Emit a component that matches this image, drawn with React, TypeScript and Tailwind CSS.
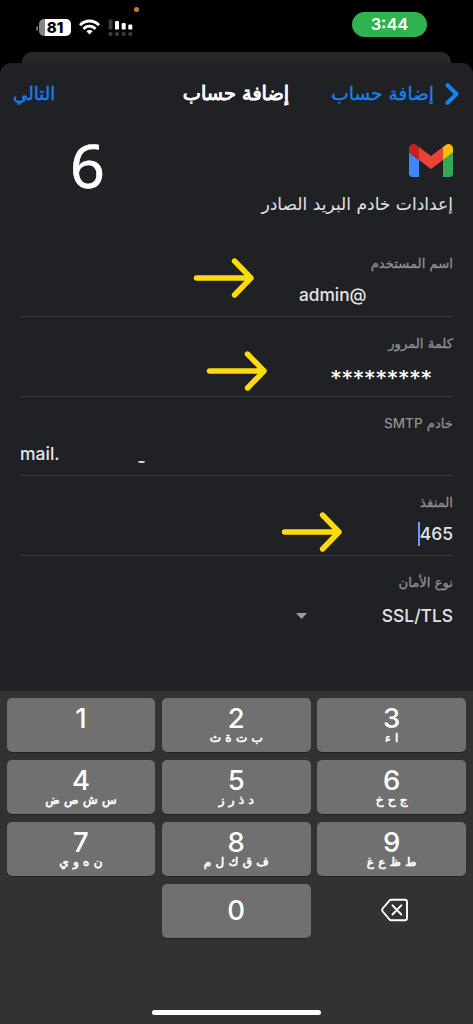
import type { ReactNode } from "react";

const AR = "font-['DejaVu_Sans',sans-serif]";
const EN = "font-['Inter',sans-serif]";

function StatusBar() {
  return (
    <div dir="ltr" className="relative flex h-[52px] justify-between pr-[46px] pl-[36px]">
      <span className="absolute left-[134px] top-[7px] size-[5px] rounded-full bg-[#c8830c]" />
      <div className="flex h-[52px] items-start pt-[19px]">
        <span className="mt-[7px] h-[5px] w-[2px] rounded-l-full bg-[#6f6f6f]" />
        <span className={`ml-[1px] flex h-[17px] w-[32px] items-center justify-center rounded-[5px] bg-[linear-gradient(90deg,#858585_6px,#ffffff_6px)] text-[15px] font-extrabold leading-none text-black ${EN}`}>
          81
        </span>
        <svg className="ml-[8px]" width="21" height="16" viewBox="0 0 21 16" fill="none" stroke="#fff" strokeWidth="2.9">
          <path d="M1 6.2C6.2 0.6 14.8 0.6 20 6.2" />
          <path d="M4.5 10C8 6.2 13 6.2 16.5 10" />
          <path d="M7.4 12.2Q10.5 9.6 13.6 12.2L10.5 15.4Z" fill="#fff" stroke="none" />
        </svg>
        <svg className="ml-[8px]" width="25" height="18" viewBox="0 0 25 18">
          <g fill="#3b3b3b">
            <rect x="0.5" y="0.5" width="4" height="10" rx="1" />
            <rect x="0.5" y="13" width="4" height="4" rx="1.5" />
            <rect x="7" y="13" width="4" height="4" rx="1.5" />
            <rect x="13.7" y="13" width="4" height="4" rx="1.5" />
            <rect x="20.3" y="13" width="4" height="4" rx="1.5" />
          </g>
          <g fill="#fff">
            <rect x="7" y="2" width="4" height="8.6" rx="1.2" />
            <rect x="13.7" y="4" width="4" height="6.6" rx="1.2" />
            <rect x="20.3" y="5.5" width="4" height="5.1" rx="1.2" />
          </g>
        </svg>
      </div>
      <div className={`mt-[12px] flex h-[25px] w-[75px] items-center justify-center rounded-full bg-[#2fb350] text-[16.5px] font-semibold leading-none text-white ${EN}`}>
        3:44
      </div>
    </div>
  );
}

function Arrow({ className }: { className: string }) {
  return (
    <svg className={`absolute ${className}`} width="62" height="42" viewBox="0 0 62 42" fill="none" stroke="#ffdb0b" strokeWidth="5.4" strokeLinecap="round" strokeLinejoin="round">
      <path d="M3.5 21H58M41.5 4L58 21L41.5 38" />
    </svg>
  );
}

function GmailLogo() {
  return (
    <svg width="44" height="33" viewBox="52 42 88 66">
      <path fill="#4285f4" d="M58 108h14V74L52 59v43c0 3.32 2.69 6 6 6" />
      <path fill="#34a853" d="M120 108h14c3.32 0 6-2.69 6-6V59l-20 15" />
      <path fill="#fbbc04" d="M120 48v26l20-15v-8c0-7.42-8.47-11.65-14.4-7.2" />
      <path fill="#ea4335" d="M72 74V48l24 18 24-18v26L96 92" />
      <path fill="#c5221f" d="M52 51v8l20 15V48l-5.6-4.2c-5.94-4.45-14.4-.22-14.4 7.2" />
    </svg>
  );
}

function Field({ label, height, line = true, children }: { label: ReactNode; height: string; line?: boolean; children: ReactNode }) {
  return (
    <div className={`relative mx-[20px] flex flex-col ${height} ${line ? "border-b border-[#37383b]" : ""}`}>
      <div className={`mt-[17px] flex h-[20px] items-center whitespace-nowrap text-[13.2px] leading-none text-[#8e8f93] [-webkit-text-stroke:0.3px_#8e8f93] ${AR}`}>{label}</div>
      {children}
    </div>
  );
}

function Key({ digit, letters }: { digit: string; letters?: string }) {
  return (
    <div className="flex h-[54px] flex-col items-center rounded-[5px] bg-[#707070] pt-[6px] shadow-[0_1px_0_#222224]">
      <span className={`text-[27.5px] font-medium leading-[28px] text-white ${EN}`}>{digit}</span>
      {letters && (
        <span dir="rtl" className={`whitespace-nowrap text-[12px] leading-[13px] text-white [word-spacing:0.5px] [-webkit-text-stroke:0.6px_#ffffff] ${AR}`}>{letters}</span>
      )}
    </div>
  );
}

const KEYS = [
  ["1", ""],
  ["2", "ب ت ة ث"],
  ["3", "ا ء"],
  ["4", "س ش ص ض"],
  ["5", "د ذ ر ز"],
  ["6", "ج ح خ"],
  ["7", "ن ه و ي"],
  ["8", "ف ق ك ل م"],
  ["9", "ط ظ ع غ"],
];

export default function App() {
  return (
    <div dir="rtl" className="flex h-[1024px] w-[473px] flex-col overflow-hidden bg-black">
      <StatusBar />
      <div className="h-[11px] shrink-0 px-[22px]">
        <div className="h-[22px] rounded-t-[10px] bg-[#28282b]" />
      </div>
      <main className="relative flex h-[628px] shrink-0 flex-col rounded-t-[11px] bg-[#202124]">
        <header className={`grid h-[62px] shrink-0 grid-cols-[1fr_auto_1fr] items-center pr-[14px] pl-[13px] leading-none ${AR}`}>
          <div className="flex items-center gap-[11px] whitespace-nowrap text-[18.6px] text-[#1583f5] [-webkit-text-stroke:0.3px_#1583f5]">
            <svg width="14" height="22" viewBox="0 0 14 22" fill="none" stroke="#1583f5" strokeWidth="4" strokeLinecap="round" strokeLinejoin="round">
              <path d="M2.5 2.2L11.5 11L2.5 19.8" />
            </svg>
            <span>إضافة حساب</span>
          </div>
          <span className="whitespace-nowrap text-[19.3px] text-white [-webkit-text-stroke:0.9px_#ffffff]">إضافة حساب</span>
          <span className="justify-self-end text-[18.2px] text-[#1583f5] [-webkit-text-stroke:0.3px_#1583f5]">التالي</span>
        </header>
        <div className="flex h-[112px] shrink-0 items-start justify-between pr-[20px] pl-[70px]">
          <div className="flex flex-col gap-[15px] pt-[19px]">
            <GmailLogo />
            <h1 className={`whitespace-nowrap text-[17.1px] leading-[24px] text-[#e0e1e4] ${AR}`}>إعدادات خادم البريد الصادر</h1>
          </div>
          <span className="mt-[8px] font-['Noto_Sans',sans-serif] text-[61px] leading-[64px] text-white [-webkit-text-stroke:0.6px_#ffffff]">6</span>
        </div>
        <Field label="اسم المستخدم" height="h-[80px]">
          <Arrow className="left-[173px] top-[20px]" />
          <div dir="ltr" className={`mt-[10.5px] flex h-[20px] items-center pl-[279px] text-[17.3px] font-medium leading-none text-[#e3e4e7] ${EN}`}>admin@</div>
        </Field>
        <Field label="كلمة المرور" height="h-[80px]">
          <Arrow className="left-[186px] top-[33px]" />
          <div dir="ltr" className="mt-[13px] flex h-[20px] items-center pl-[311px] font-['DejaVu_Sans',sans-serif] text-[19px] font-bold leading-none tracking-[1.35px] text-white">*********</div>
        </Field>
        <Field label={<span>خادم <span className={`text-[13.5px] font-medium [-webkit-text-stroke:0px] ${EN}`}>SMTP</span></span>} height="h-[79px]">
          <div dir="ltr" className={`relative mt-[10px] flex h-[20px] items-center text-[17.5px] font-medium leading-none text-[#e3e4e7] ${EN}`}>
            mail.
            <span className="absolute left-[118px] top-[17px] h-[2px] w-[7px] rounded-b-full bg-[#d0d1d4]" />
          </div>
        </Field>
        <Field label="المنفذ" height="h-[80px]">
          <Arrow className="left-[261px] top-[35px]" />
          <div dir="ltr" className={`mt-[11px] flex h-[20px] items-center justify-end text-[17.5px] font-medium leading-none text-[#e3e4e7] ${EN}`}>
            <span className="h-[24px] w-[2px] shrink-0 bg-[#6f9ce8]" />
            465
          </div>
        </Field>
        <Field label="نوع الأمان" height="h-[80px]" line={false}>
          <div dir="ltr" className={`mt-[13px] flex h-[20px] items-center justify-between pl-[276px] text-[17.4px] font-medium leading-none text-[#e3e4e7] ${EN}`}>
            <svg width="11" height="6" viewBox="0 0 11 6"><path d="M0 0H11L5.5 6Z" fill="#9b9ca0" /></svg>
            SSL/TLS
          </div>
        </Field>
      </main>
      <section dir="ltr" className="flex min-h-0 flex-1 flex-col bg-[#323234] pt-[7px] pr-[7px] pl-[6.5px]">
        <div className="grid grid-cols-3 gap-x-[6.5px] gap-y-[8px]">
          {KEYS.map(([d, l]) => (
            <Key key={d} digit={d} letters={l} />
          ))}
          <div className="col-start-2 flex h-[54px] items-center justify-center rounded-[5px] bg-[#707070] shadow-[0_1px_0_#222224]">
            <span className={`text-[27.5px] font-medium leading-none text-white ${EN}`}>0</span>
          </div>
          <div className="flex h-[54px] items-center justify-center pb-[3px] pl-[6px]">
            <svg width="28" height="24" viewBox="0 0 28 24" fill="none" stroke="#fff" strokeWidth="1.9" strokeLinecap="round" strokeLinejoin="round">
              <path d="M10.3 1.8H24Q26 1.8 26 3.8V20.2Q26 22.2 24 22.2H10.3Q9.2 22.2 8.4 21.3L1.7 13.5Q0.6 12 1.7 10.5L8.4 2.7Q9.2 1.8 10.3 1.8Z" />
              <path d="M11.5 7.3L20.3 16.5M20.3 7.3L11.5 16.5" />
            </svg>
          </div>
        </div>
        <div className="mt-auto mb-[9px] ml-[145.5px] h-[5px] w-[169px] rounded-full bg-white" />
      </section>
    </div>
  );
}
